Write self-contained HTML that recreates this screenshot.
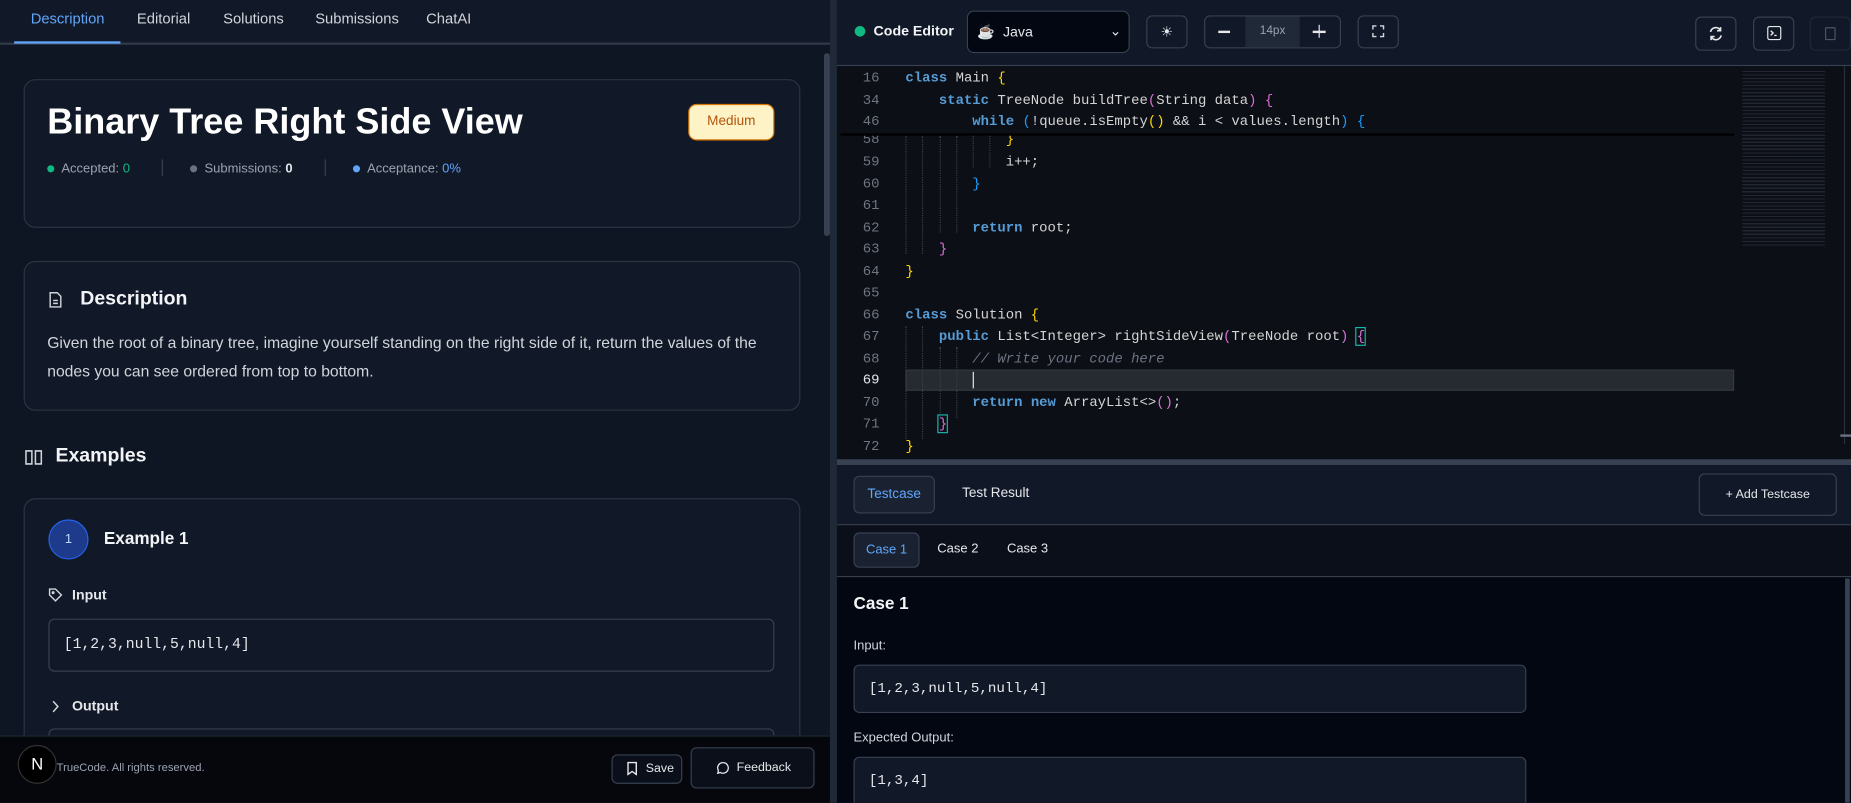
<!DOCTYPE html>
<html><head><meta charset="utf-8">
<style>
*{box-sizing:border-box;margin:0;padding:0}
body{width:1851px;height:802px;overflow:hidden;background:#0f1623;font-family:"Liberation Sans",sans-serif;color:#e5e7eb}
#s{position:absolute;left:0;top:0;width:1568px;height:680px;transform:scale(1.18048);transform-origin:0 0;overflow:hidden;background:#0f1623}
.a{position:absolute}
.card{position:absolute;border:1px solid #2b3444;border-radius:10px;background:#111827}
.tab{position:absolute;top:9px;font-size:12.5px;color:#d1d5db}
.btn{position:absolute;border:1px solid #374151;border-radius:5px;background:#111827}
.code{position:absolute;left:767px;font-family:"Liberation Mono",monospace;font-size:11.8px;color:#d4d4d4;white-space:pre;line-height:18.5px}
.ln{position:absolute;left:712px;width:33px;text-align:right;font-family:"Liberation Mono",monospace;font-size:11.8px;color:#6e7681;line-height:18.5px}
.k{color:#569cd6;font-weight:bold}.y{color:#ffd700}.p{color:#da70d6}.b{color:#179fff}
.box{position:absolute;border:1px solid #374151;border-radius:5px;background:#111827;font-family:"Liberation Mono",monospace;font-size:12.5px;color:#e5e7eb;padding-left:12px}
.g{position:absolute;width:0;border-left:1px dotted #3a3f48}
</style></head><body><div id="s">
<!-- left panel -->
<div class="a" style="left:0;top:0;width:703px;height:38px;border-bottom:2px solid #2f3846;background:#111827"></div>
<div class="tab" style="left:26px;color:#60a5fa">Description</div>
<div class="a" style="left:12px;top:35px;width:90px;height:2px;background:#60a5fa"></div>
<div class="tab" style="left:116px">Editorial</div>
<div class="tab" style="left:189px">Solutions</div>
<div class="tab" style="left:267px">Submissions</div>
<div class="tab" style="left:361px">ChatAI</div>
<div class="a" style="left:698px;top:45px;width:5px;height:155px;background:#374151;border-radius:3px"></div>
<div class="a" style="left:703px;top:0;width:6px;height:680px;background:#1f2937"></div>

<div class="card" style="left:20px;top:67px;width:658px;height:126px"></div>
<div class="a" style="left:40px;top:86px;font-size:30.5px;font-weight:bold;color:#fff">Binary Tree Right Side View</div>
<div class="a" style="left:583px;top:88px;width:73px;height:31px;border:1px solid #d97706;border-radius:7px;background:#fef3c7;color:#b45309;font-size:11.5px;text-align:center;line-height:29px">Medium</div>
<div class="a" style="left:40px;top:135px;font-size:11px;color:#9ca3af;white-space:nowrap">
<span style="display:inline-block;width:6px;height:6px;border-radius:3px;background:#10b981;margin-right:6px"></span>Accepted: <span style="color:#10b981">0</span>
<span style="display:inline-block;width:1px;height:14px;background:#374151;margin:0 20px -3px 24px"></span>
<span style="display:inline-block;width:6px;height:6px;border-radius:3px;background:#6b7280;margin-right:6px"></span>Submissions: <b style="color:#e5e7eb">0</b>
<span style="display:inline-block;width:1px;height:14px;background:#374151;margin:0 20px -3px 24px"></span>
<span style="display:inline-block;width:6px;height:6px;border-radius:3px;background:#60a5fa;margin-right:6px"></span>Acceptance: <span style="color:#60a5fa">0%</span></div>

<div class="card" style="left:20px;top:221px;width:658px;height:127px"></div>
<svg class="a" style="left:41px;top:247px" width="12" height="14" viewBox="0 0 12 14" fill="none" stroke="#d1d5db" stroke-width="1.2"><path d="M1.5 1h6l3 3v9h-9z M4 7.5h4 M4 10h4"/></svg>
<div class="a" style="left:68px;top:244px;font-size:16.5px;font-weight:bold;color:#f3f4f6">Description</div>
<div class="a" style="left:40px;top:279px;width:630px;font-size:13.3px;line-height:24px;color:#d1d5db">Given the root of a binary tree, imagine yourself standing on the right side of it, return the values of the nodes you can see ordered from top to bottom.</div>

<svg class="a" style="left:21px;top:380px" width="15" height="15" viewBox="0 0 15 15" fill="none" stroke="#d1d5db" stroke-width="1.3"><path d="M1 2h5v11H1z M9 2h5v11H9z"/></svg>
<div class="a" style="left:47px;top:377px;font-size:16.5px;font-weight:bold;color:#f3f4f6">Examples</div>

<div class="card" style="left:20px;top:422px;width:658px;height:230px"></div>
<div class="a" style="left:41px;top:440px;width:34px;height:34px;border-radius:50%;background:#1e3a8a;border:1px solid #2563eb;color:#bfdbfe;font-size:11px;text-align:center;line-height:32px">1</div>
<div class="a" style="left:88px;top:449px;font-size:14.5px;font-weight:bold;color:#f3f4f6">Example 1</div>
<svg class="a" style="left:41px;top:498px" width="12" height="12" viewBox="0 0 12 12" fill="none" stroke="#d1d5db" stroke-width="1.2"><path d="M1 1h5l5 5-5 5-5-5z"/><circle cx="4" cy="4" r=".7"/></svg>
<div class="a" style="left:61px;top:497px;font-size:12px;font-weight:bold">Input</div>
<div class="box" style="left:41px;top:524px;width:615px;height:45px;line-height:43px">[1,2,3,null,5,null,4]</div>
<svg class="a" style="left:43px;top:593px" width="8" height="11" viewBox="0 0 8 11" fill="none" stroke="#d1d5db" stroke-width="1.3"><path d="M2 1l4 4.5L2 10"/></svg>
<div class="a" style="left:61px;top:591px;font-size:12px;font-weight:bold">Output</div>
<div class="box" style="left:41px;top:617px;width:615px;height:40px"></div>

<div class="a" style="left:0;top:623px;width:703px;height:57px;background:#05070d;border-top:1px solid #1f2937"></div>
<div class="a" style="left:15px;top:631px;width:33px;height:33px;border-radius:50%;background:#000;border:1px solid #333;color:#fff;font-size:14px;text-align:center;line-height:31px">N</div>
<div class="a" style="left:48px;top:645px;font-size:9.5px;color:#9ca3af">TrueCode. All rights reserved.</div>
<div class="btn" style="left:518px;top:639px;width:60px;height:25px;background:#0b0f19;font-size:10.5px;line-height:23px;padding-left:28px">Save</div>
<svg class="a" style="left:531px;top:645px" width="9" height="12" viewBox="0 0 9 12" fill="none" stroke="#e5e7eb" stroke-width="1.2"><path d="M1 1h7v10l-3.5-2.5L1 11z"/></svg>
<div class="btn" style="left:585px;top:633px;width:105px;height:35px;background:#0b0f19;font-size:10.5px;line-height:33px;padding-left:38px">Feedback</div>
<svg class="a" style="left:607px;top:645px" width="11" height="11" viewBox="0 0 11 11" fill="none" stroke="#e5e7eb" stroke-width="1.1"><path d="M5.5 1a4.5 4.5 0 1 1-2.3 8.4L1 10l.6-2.2A4.5 4.5 0 0 1 5.5 1z"/></svg>

<!-- right header -->
<div class="a" style="left:709px;top:0;width:859px;height:56px;background:#111827;border-bottom:1px solid #374151"></div>
<div class="a" style="left:724px;top:22px;width:9px;height:9px;border-radius:5px;background:#10b981"></div>
<div class="a" style="left:740px;top:19px;font-size:12px;font-weight:bold;color:#f3f4f6">Code Editor</div>
<div class="a" style="left:819px;top:9px;width:138px;height:36px;border:1px solid #374151;border-radius:6px;background:#030712;font-size:12px;line-height:34px;padding-left:8px">☕ &nbsp;Java<span style="position:absolute;right:6px;top:-1px;font-size:12px">⌄</span></div>
<div class="btn" style="left:971px;top:13px;width:35px;height:28px;text-align:center;line-height:26px;font-size:12px">☀</div>
<div class="btn" style="left:1020px;top:13px;width:116px;height:28px"></div>
<div class="a" style="left:1055px;top:14px;width:46px;height:26px;background:#1f2937;color:#9ca3af;font-size:10px;text-align:center;line-height:26px">14px</div>
<div class="a" style="left:1032px;top:26px;width:10px;height:1.5px;background:#e5e7eb"></div>
<div class="a" style="left:1112px;top:26px;width:11px;height:1.5px;background:#e5e7eb"></div>
<div class="a" style="left:1116.8px;top:21px;width:1.5px;height:11px;background:#e5e7eb"></div>
<div class="btn" style="left:1150px;top:13px;width:35px;height:28px"></div>
<svg class="a" style="left:1162px;top:21px" width="11" height="11" viewBox="0 0 11 11" fill="none" stroke="#d1d5db" stroke-width="1.2"><path d="M1 4V1h3 M7 1h3v3 M10 7v3H7 M4 10H1V7"/></svg>
<div class="btn" style="left:1436px;top:14px;width:35px;height:29px"></div>
<svg class="a" style="left:1447px;top:22px" width="13" height="13" viewBox="0 0 13 13" fill="none" stroke="#e5e7eb" stroke-width="1.4"><path d="M2 5a4.5 4.5 0 0 1 8.5-1M11 8a4.5 4.5 0 0 1-8.5 1 M10.5 1v3h-3 M2.5 12V9h3"/></svg>
<div class="btn" style="left:1485px;top:14px;width:35px;height:29px"></div>
<div class="a" style="left:1497px;top:22px;width:12px;height:12px;border:1.4px solid #e5e7eb;border-radius:2px"></div>
<svg class="a" style="left:1499px;top:25px" width="7" height="6" viewBox="0 0 7 6" fill="none" stroke="#e5e7eb" stroke-width="1.2"><path d="M1 1l2 2-2 2 M4 5h2"/></svg>
<div class="btn" style="left:1533px;top:14px;width:35px;height:29px;border-color:#1f2937"></div>
<div class="a" style="left:1546px;top:23px;width:9px;height:11px;border:1px solid #4b5563;border-radius:1px"></div>

<!-- code -->
<div class="a" style="left:709px;top:56px;width:859px;height:333px;background:#0c0f16"></div>
<div class="a" style="left:767px;top:313px;width:702px;height:18px;background:#262a31;border:1px solid #33373f"></div>
<div class="a" style="left:1562px;top:56px;width:1px;height:320px;background:#2a2f38"></div>
<div class="a" style="left:1559px;top:368px;width:9px;height:2px;background:#6b7280"></div>
<div class="ln" style="top:57px">16<br>34<br>46</div>
<div class="code" style="top:57px"><span class="k">class</span> Main <span class="y">{</span>
    <span class="k">static</span> TreeNode buildTree<span class="p">(</span>String data<span class="p">)</span> <span class="p">{</span>
        <span class="k">while</span> <span class="b">(</span>!queue.isEmpty<span class="y">()</span> &amp;&amp; i &lt; values.length<span class="b">)</span> <span class="b">{</span></div>
<div class="a" style="left:712px;top:113px;width:757px;height:2px;background:#000"></div>
<div style="position:absolute;left:709px;top:115px;width:800px;height:13px;overflow:hidden">
<div class="ln" style="left:3px;top:-6px">58</div>
<div class="code" style="left:58px;top:-6px">            <span class="y">}</span></div></div>
<div class="ln" style="top:128px">59<br>60<br>61<br>62<br>63<br>64<br>65<br>66<br>67<br>68<br><span style="color:#e5e7eb">69</span><br>70<br>71<br>72</div>
<div class="g" style="left:767px;top:115px;height:100px"></div>
<div class="g" style="left:781px;top:115px;height:100px"></div>
<div class="g" style="left:796px;top:115px;height:82px"></div>
<div class="g" style="left:810px;top:115px;height:82px"></div>
<div class="g" style="left:824px;top:115px;height:27px"></div>
<div class="g" style="left:838px;top:115px;height:27px"></div>
<div class="g" style="left:767px;top:276px;height:96px"></div>
<div class="g" style="left:781px;top:276px;height:96px"></div>
<div class="g" style="left:796px;top:294px;height:60px"></div>
<div class="g" style="left:810px;top:294px;height:60px"></div>
<div class="code" style="top:128px">            i++;
        <span class="b">}</span>

        <span class="k">return</span> root;
    <span class="p">}</span>
<span class="y">}</span>

<span class="k">class</span> Solution <span class="y">{</span>
    <span class="k">public</span> List&lt;Integer&gt; rightSideView<span class="p">(</span>TreeNode root<span class="p">)</span> <span style="outline:1px solid #14b8a6" class="p">{</span>
        <span style="color:#6b7280;font-style:italic">// Write your code here</span>
        <span style="border-left:1.5px solid #e5e7eb"></span>
        <span class="k">return</span> <span class="k">new</span> ArrayList&lt;&gt;<span class="p">()</span>;
    <span style="outline:1px solid #14b8a6" class="p">}</span>
<span class="y">}</span></div>
<div class="a" style="left:1476px;top:58px;width:70px;height:150px;background:repeating-linear-gradient(#0c0f16 0 2px,#3b4252 2px 3px);opacity:.45"></div>

<!-- splitter -->
<div class="a" style="left:709px;top:389px;width:859px;height:5px;background:#374151"></div>

<!-- test panel -->
<div class="a" style="left:709px;top:394px;width:859px;height:51px;background:#111827;border-bottom:1px solid #374151"></div>
<div class="btn" style="left:723px;top:403px;width:69px;height:32px;background:#1a2232;color:#60a5fa;font-size:11.5px;text-align:center;line-height:30px">Testcase</div>
<div class="a" style="left:815px;top:412px;font-size:11.5px;color:#e5e7eb">Test Result</div>
<div class="btn" style="left:1439px;top:401px;width:117px;height:36px;font-size:10.5px;text-align:center;line-height:34px">+ Add Testcase</div>
<div class="a" style="left:709px;top:445px;width:859px;height:44px;background:#0b0f19;border-bottom:1px solid #374151"></div>
<div class="btn" style="left:723px;top:451px;width:56px;height:30px;background:#1a2232;color:#60a5fa;font-size:11px;text-align:center;line-height:28px">Case 1</div>
<div class="a" style="left:794px;top:459px;font-size:11px">Case 2</div>
<div class="a" style="left:853px;top:459px;font-size:11px">Case 3</div>
<div class="a" style="left:709px;top:489px;width:859px;height:191px;background:#030712"></div>
<div class="a" style="left:1563px;top:490px;width:4px;height:190px;background:#374151"></div>
<div class="a" style="left:723px;top:504px;font-size:14.5px;font-weight:bold;color:#f3f4f6">Case 1</div>
<div class="a" style="left:723px;top:541px;font-size:11px;color:#d1d5db">Input:</div>
<div class="box" style="left:723px;top:563px;width:570px;height:41px;line-height:39px;font-size:12px">[1,2,3,null,5,null,4]</div>
<div class="a" style="left:723px;top:619px;font-size:11px;color:#d1d5db">Expected Output:</div>
<div class="box" style="left:723px;top:641px;width:570px;height:50px;line-height:39px;font-size:12px">[1,3,4]</div>
</div></body></html>
